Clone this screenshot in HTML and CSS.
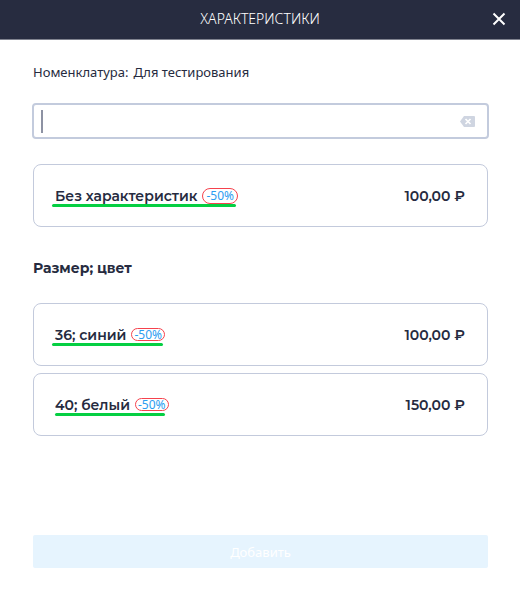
FILE: index.html
```
<!DOCTYPE html>
<html lang="ru">
<head>
    <meta charset="UTF-8">
    <meta name="viewport" content="width=device-width, initial-scale=1">
    <title>Характеристики</title>
    <link rel="stylesheet" href="styles.css">
</head>
<body>
    <header class="header">
        <h1 class="header-title">ХАРАКТЕРИСТИКИ</h1>
        <button type="button" class="close" aria-label="Закрыть">
            <svg width="14" height="14" viewBox="0 0 14 14"><path d="M1.5 1.5L12.5 12.5M12.5 1.5L1.5 12.5" stroke="#fff" stroke-width="2" fill="none"/></svg>
        </button>
    </header>

    <main class="content">
        <label class="item-label" for="search"><span>Номенклатура:</span> <span>Для тестирования</span></label>

        <div class="search">
            <span class="caret"></span>
            <input type="text" id="search" class="search-input">
            <button type="button" class="clear" aria-label="Очистить">
                <svg width="15" height="11" viewBox="0 0 15 11"><path d="M4 0H14Q15 0 15 1V10Q15 11 14 11H4L0 5.5Z" fill="#cfd5e1"/><path d="M5.5 3L10.5 8M10.5 3L5.5 8" stroke="#fff" stroke-width="1.7" fill="none"/></svg>
            </button>
        </div>

        <button type="button" class="card">
            <span class="name">Без характеристик <span class="discount discount-big">-50%</span></span>
            <span class="price">100,00 ₽</span>
        </button>

        <h2 class="group-title">Размер; цвет</h2>

        <div class="cards">
            <button type="button" class="card">
                <span class="name">36; синий <span class="discount">-50%</span></span>
                <span class="price">100,00 ₽</span>
            </button>
            <button type="button" class="card">
                <span class="name name-short">40; белый <span class="discount">-50%</span></span>
                <span class="price">150,00 ₽</span>
            </button>
        </div>

        <button type="button" class="add" disabled>Добавить</button>
    </main>
</body>
</html>
```
FILE: styles.css
```
* {
    box-sizing: border-box;
}

body {
    margin: 0;
    min-height: 100vh;
    display: flex;
    flex-direction: column;
    background: #fff;
    color: #262b40;
    font-family: "Noto Sans", "Open Sans", sans-serif;
    font-size: 13px;
}

button {
    font-family: inherit;
    color: inherit;
    border: 0;
    padding: 0;
    background: none;
}

svg {
    display: block;
}

/* header */
.header {
    display: grid;
    grid-template-columns: 42px 1fr 42px;
    align-items: center;
    height: 40px;
    padding-bottom: 2px;
    background: #272c40;
    border-bottom: 1px solid #80838f;
    color: #fff;
}

.header-title {
    grid-column: 2;
    margin: 0;
    font-size: 14px;
    font-weight: 300;
    text-align: center;
}

.close {
    justify-self: center;
}

/* content */
.content {
    flex: 1;
    display: flex;
    flex-direction: column;
    padding: 22px 32px 31px 33px;
}

.item-label {
    display: flex;
    gap: 5px;
    line-height: 20px;
}

.search {
    display: flex;
    align-items: center;
    height: 36px;
    margin: 21px -1px 25px;
    padding: 0 12px 0 7px;
    border: 2px solid #c3cbdd;
    border-radius: 4px;
}

.caret {
    width: 2px;
    height: 23px;
    background: #8d92a3;
}

.search-input {
    flex: 1;
    min-width: 0;
    border: 0;
    outline: 0;
    background: none;
    font: inherit;
}

.cards {
    display: flex;
    flex-direction: column;
    gap: 7px;
}

.card {
    display: flex;
    align-items: center;
    justify-content: space-between;
    width: 100%;
    height: 63px;
    padding: 0 22px 0 21px;
    border: 1px solid #c3cadc;
    border-radius: 8px;
    font-family: Montserrat, Inter, sans-serif;
    font-size: 14px;
    font-weight: 600;
}

.name {
    position: relative;
    display: flex;
    align-items: center;
    gap: 5px;
}

/* green line under the name */
.name::after {
    content: "";
    position: absolute;
    left: -3px;
    right: 2px;
    bottom: -2px;
    height: 3px;
    border-radius: 2px;
    background: #05cf42;
}

.name-short::after {
    left: 0;
    right: 4px;
}

.discount {
    padding: 0 2px;
    border: 1px solid #f5424d;
    border-radius: 7px;
    color: #2c9df0;
    font-family: "Noto Sans", "Open Sans", sans-serif;
    font-size: 12px;
    font-weight: 400;
    line-height: 11px;
}

.discount-big {
    padding: 0 3px;
    border-radius: 8px;
    line-height: 14px;
}

.group-title {
    margin: 31px 0 25px;
    font-family: Montserrat, Inter, sans-serif;
    font-size: 14px;
    font-weight: 700;
    line-height: 20px;
}

.add {
    height: 33px;
    margin-top: auto;
    border-radius: 2px;
    background: #e6f4fe;
    color: #fff;
    font-size: 13px;
}
```
